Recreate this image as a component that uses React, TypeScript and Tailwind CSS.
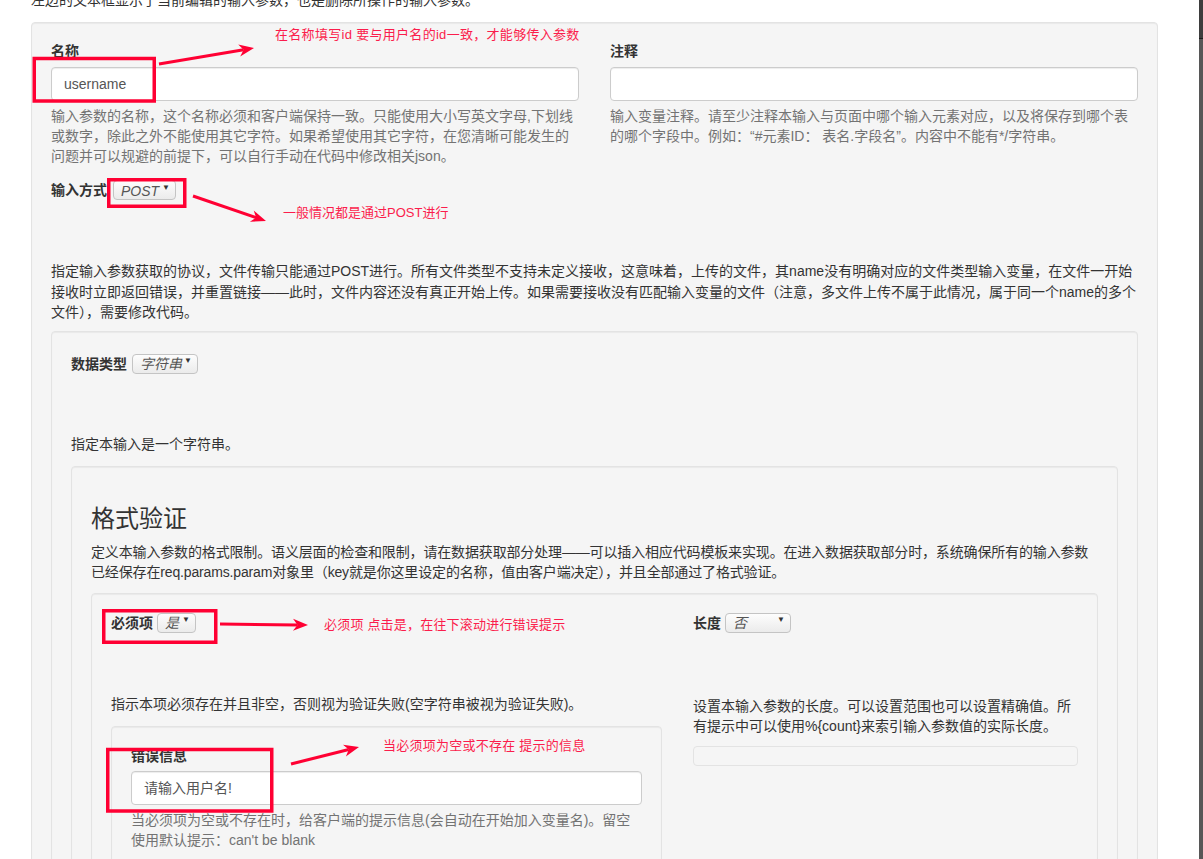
import React from 'react';

const RED = '#ff0033';

function Well({ className = '', children }: { className?: string; children?: React.ReactNode }) {
  return (
    <div className={`rounded-[4px] border border-[#e3e3e3] bg-[#f5f5f5] shadow-[inset_0_1px_1px_rgba(0,0,0,0.05)] ${className}`}>
      {children}
    </div>
  );
}

// small native-looking select
function Pick({ value, className = '' }: { value: string; className?: string }) {
  return (
    <span
      className={`inline-flex h-[20px] items-center justify-between rounded-[4px] border border-[#c4c4c4] bg-linear-to-b from-[#fdfdfd] to-[#ebebeb] pl-[7px] pr-[5px] text-[14px] italic leading-none text-[#555] ${className}`}
    >
      <span className="pt-[1px]">{value}</span>
      <span className="-mt-[5px] text-[8px] not-italic text-[#333]">▼</span>
    </span>
  );
}

function Input({ value }: { value: string }) {
  return (
    <div className="flex h-[34px] items-center rounded-[4px] border border-[#ccc] bg-white px-3 text-[#555] shadow-[inset_0_1px_1px_rgba(0,0,0,0.075)]">
      {value}
    </div>
  );
}

function Field({ label, value, help }: { label: string; value: string; help: string }) {
  return (
    <div>
      <label className="mb-[6px] block font-bold">{label}</label>
      <Input value={value} />
      <p className="mt-[5px] text-[#737373]">{help}</p>
    </div>
  );
}

function Arrow({ x1, y1, x2, y2 }: { x1: number; y1: number; x2: number; y2: number }) {
  const dx = x2 - x1;
  const dy = y2 - y1;
  const len = Math.hypot(dx, dy);
  const ux = dx / len;
  const uy = dy / len;
  const hl = 15;
  const hw = 6;
  const bx = x2 - ux * hl;
  const by = y2 - uy * hl;
  const nx = x2 - ux * hl * 0.7;
  const ny = y2 - uy * hl * 0.7;
  const pts = `${x2},${y2} ${bx - uy * hw},${by + ux * hw} ${nx},${ny} ${bx + uy * hw},${by - ux * hw}`;
  return (
    <g>
      <line x1={x1} y1={y1} x2={nx} y2={ny} stroke={RED} strokeWidth={3} />
      <polygon points={pts} fill={RED} />
    </g>
  );
}

function Note({ className, children }: { className: string; children: React.ReactNode }) {
  return <span className={`absolute whitespace-nowrap text-[13px] leading-5 text-[#fb1d4c] ${className}`}>{children}</span>;
}

const lengthHelp = '设置本输入参数的长度。可以设置范围也可以设置精确值。所有提示中可以使用%{count}来索引输入参数值的实际长度。';

export default function App() {
  return (
    <div className="relative flex h-[859px] overflow-hidden bg-white font-['Liberation_Sans','Noto_Sans_CJK_SC',sans-serif] text-[14px] leading-5 text-[#333]">
      <div className="w-[1199px] shrink-0">
        <p className="-mt-[10px] mb-[12px] ml-[31px]">左边的文本框显示了当前编辑的输入参数，也是删除所操作的输入参数。</p>

        <Well className="ml-[31px] w-[1127px] px-[19px] pt-[18px] pb-[19px]">
          <div className="grid grid-cols-2 gap-x-[31px]">
            <Field
              label="名称"
              value="username"
              help="输入参数的名称，这个名称必须和客户端保持一致。只能使用大小写英文字母,下划线或数字，除此之外不能使用其它字符。如果希望使用其它字符，在您清晰可能发生的问题并可以规避的前提下，可以自行手动在代码中修改相关json。"
            />
            <Field
              label="注释"
              value=""
              help="输入变量注释。请至少注释本输入与页面中哪个输入元素对应，以及将保存到哪个表的哪个字段中。例如：“#元素ID： 表名.字段名”。内容中不能有*/字符串。"
            />
          </div>

          <div className="mt-[14px] flex items-center gap-[6px]">
            <span className="font-bold">输入方式</span>
            <Pick value="POST" className="w-[63px]" />
          </div>

          <p className="mt-[61px] leading-[20.5px]">
            指定输入参数获取的协议，文件传输只能通过POST进行。所有文件类型不支持未定义接收，这意味着，上传的文件，其name没有明确对应的文件类型输入变量，在文件一开始接收时立即返回错误，并重置链接——此时，文件内容还没有真正开始上传。如果需要接收没有匹配输入变量的文件（注意，多文件上传不属于此情况，属于同一个name的多个文件），需要修改代码。
          </p>

          <Well className="mt-[8px] p-[19px]">
            <div className="mt-[3px] flex items-center gap-[5px]">
              <span className="font-bold">数据类型</span>
              <Pick value="字符串" className="w-[66px]" />
            </div>

            <p className="mt-[60px]">指定本输入是一个字符串。</p>

            <Well className="mt-[12px] p-[19px]">
              <h3 className="mt-[20px] mb-[10px] text-[24px] leading-[26px] font-normal">格式验证</h3>
              <p className="tracking-[-0.15px]">
                定义本输入参数的格式限制。语义层面的检查和限制，请在数据获取部分处理——可以插入相应代码模板来实现。在进入数据获取部分时，系统确保所有的输入参数已经保存在req.params.param对象里（key就是你这里设定的名称，值由客户端决定），并且全部通过了格式验证。
              </p>

              <Well className="mt-[11px] p-[19px]">
                <div className="grid grid-cols-[551px_385px] gap-x-[31px]">
                  <div>
                    <div className="flex items-center gap-[4px]">
                      <span className="font-bold">必须项</span>
                      <Pick value="是" className="w-[39px]" />
                    </div>
                    <p className="mt-[61px]">指示本项必须存在并且非空，否则视为验证失败(空字符串被视为验证失败)。</p>
                    <Well className="mt-[12px] p-[19px]">
                      <label className="mb-[5px] block font-bold">错误信息</label>
                      <Input value="请输入用户名!" />
                      <p className="mt-[5px] text-[#737373]">
                        当必须项为空或不存在时，给客户端的提示信息(会自动在开始加入变量名)。留空使用默认提示：can't be blank
                      </p>
                    </Well>
                  </div>

                  <div>
                    <div className="flex items-center gap-[4px]">
                      <span className="font-bold">长度</span>
                      <Pick value="否" className="w-[66px]" />
                    </div>
                    <p className="mt-[63px]">{lengthHelp}</p>
                    <div className="mt-[10px] h-[20px] rounded-[4px] border border-[#e3e3e3] bg-[#f5f5f5]" />
                  </div>
                </div>
              </Well>
            </Well>
          </Well>
        </Well>
      </div>

      {/* window edge */}
      <div className="flex w-[4px] flex-col">
        <div className="h-[38px] bg-[#3d3d3d]" />
        <div className="h-px bg-[#1c1c1c]" />
        <div className="flex-1 bg-[#575757]" />
      </div>

      {/* annotations */}
      <svg className="pointer-events-none absolute left-0 top-0" width="1199" height="859">
        <g fill="none" stroke={RED} strokeWidth={3.5}>
          <rect x={34.25} y={58.5} width={120} height={42.5} />
          <rect x={108.75} y={179.75} width={76} height={26.5} />
          <rect x={103.75} y={610.75} width={112} height={31.5} />
          <rect x={107.75} y={749.5} width={164} height={61.5} />
        </g>
        <Arrow x1={159} y1={64} x2={254} y2={48} />
        <Arrow x1={193} y1={196} x2={266} y2={221} />
        <Arrow x1={220} y1={624} x2={308} y2={625} />
        <Arrow x1={291} y1={764} x2={359} y2={747} />
      </svg>
      <Note className="left-[275px] top-[25px] tracking-[0.3px]">在名称填写id 要与用户名的id一致，才能够传入参数</Note>
      <Note className="left-[283px] top-[203px]">一般情况都是通过POST进行</Note>
      <Note className="left-[324px] top-[615px] tracking-[0.2px]">必须项 点击是，在往下滚动进行错误提示</Note>
      <Note className="left-[383px] top-[736px] tracking-[0.25px]">当必须项为空或不存在 提示的信息</Note>
    </div>
  );
}
